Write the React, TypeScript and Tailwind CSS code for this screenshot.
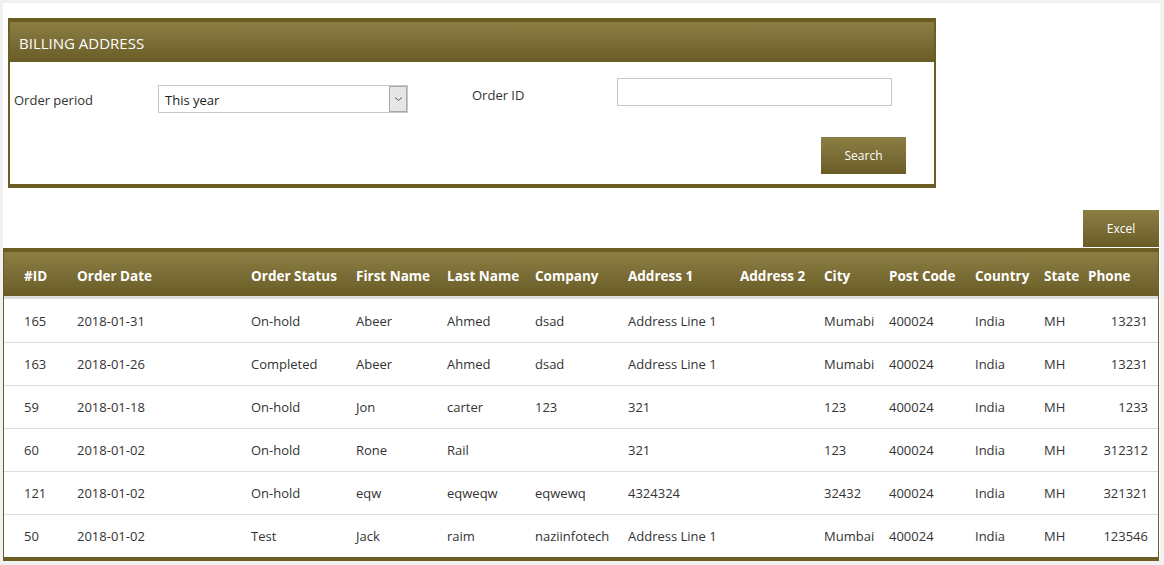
import React from "react";

const rows = [
  ["165", "2018-01-31", "On-hold", "Abeer", "Ahmed", "dsad", "Address Line 1", "", "Mumabi", "400024", "India", "MH", "13231"],
  ["163", "2018-01-26", "Completed", "Abeer", "Ahmed", "dsad", "Address Line 1", "", "Mumabi", "400024", "India", "MH", "13231"],
  ["59", "2018-01-18", "On-hold", "Jon", "carter", "123", "321", "", "123", "400024", "India", "MH", "1233"],
  ["60", "2018-01-02", "On-hold", "Rone", "Rail", "", "321", "", "123", "400024", "India", "MH", "312312"],
  ["121", "2018-01-02", "On-hold", "eqw", "eqweqw", "eqwewq", "4324324", "", "32432", "400024", "India", "MH", "321321"],
  ["50", "2018-01-02", "Test", "Jack", "raim", "naziinfotech", "Address Line 1", "", "Mumbai", "400024", "India", "MH", "123546"],
];

const headers = ["#ID", "Order Date", "Order Status", "First Name", "Last Name", "Company", "Address 1", "Address 2", "City", "Post Code", "Country", "State", "Phone"];
const widths = [74, 174, 105, 91, 88, 93, 112, 84, 65, 86, 69, 44, 71];

export default function App() {
  return (
    <div className="h-[565px] w-[1164px] bg-[#f1f1f1] p-[3px]" style={{ fontFamily: '"Open Sans", "Noto Sans", sans-serif' }}>
      <div className="h-[557px] w-[1157px] bg-white">
        <div className="h-[15px]" />
        {/* Billing panel */}
        <div className="ml-[5px] w-[928px] border-x-2 border-y-4 border-[#6b5d24]">
          <div className="flex h-[40px] items-center bg-gradient-to-b from-[#8c7f45] to-[#6a5c26] pl-[9px] pt-[2px] text-[15px] text-white">
            BILLING ADDRESS
          </div>
          <div className="h-[122px]">
            <div className="flex items-start">
              <div className="mt-[23px] flex items-center">
                <div className="w-[148px] pl-[4px] pt-[4px] text-[13px] text-[#333]">Order period</div>
                <div className="relative flex h-[28px] w-[250px] items-center border border-[#c8c8c8] bg-white pl-[6px] pt-[4px] text-[13px] text-[#222]">
                  This year
                  <div className="absolute right-[0px] top-[0px] flex h-[26px] w-[18px] items-center justify-center border border-[#a8a8a8] bg-[#e6e6e6]">
                    <svg width="9" height="6" viewBox="0 0 9 6">
                      <path d="M1 1.5 L4.5 4.5 L8 1.5" fill="none" stroke="#555" strokeWidth="1" />
                    </svg>
                  </div>
                </div>
              </div>
              <div className="mt-[16px] ml-[64px] flex items-start">
                <div className="w-[145px] pt-[8px] text-[13px] text-[#333]">Order ID</div>
                <div className="h-[28px] w-[275px] border border-[#c8c8c8] bg-white" />
              </div>
            </div>
            <div className="mt-[24px] flex justify-end pr-[28px]">
              <div className="flex h-[37px] w-[85px] items-center justify-center bg-gradient-to-b from-[#8c7f45] to-[#6a5c26] text-[12px] text-white">
                Search
              </div>
            </div>
          </div>
        </div>
        {/* Excel */}
        <div className="mt-[22px] flex justify-end pr-[1px]">
          <div className="flex h-[37px] w-[76px] items-center justify-center bg-gradient-to-b from-[#8c7f45] to-[#6a5c26] text-[12px] text-white">
            Excel
          </div>
        </div>
        {/* Table */}
        <div className="mt-[1px] w-[1156px] border-x border-y-4 border-[#6b5d24]">
          <table className="w-[1154px] table-fixed border-collapse">
            <colgroup>
              {widths.map((w, i) => (
                <col key={i} style={{ width: i === 0 ? w - 1 : i === widths.length - 1 ? w - 1 : w }} />
              ))}
            </colgroup>
            <thead>
              <tr className="h-[44px] bg-gradient-to-b from-[#8c7f45] to-[#6a5c26]">
                {headers.map((h, i) => (
                  <th key={i} className={`pt-[5px] text-left text-[13.5px] font-bold text-white whitespace-nowrap ${i === 0 ? "pl-[20px]" : ""}`}>
                    {h}
                  </th>
                ))}
              </tr>
              <tr className="h-[3px] bg-[#dddddd]">
                <td colSpan={13} className="p-0" />
              </tr>
            </thead>
            <tbody>
              {rows.map((r, ri) => (
                <tr key={ri} className={`h-[43px] ${ri < rows.length - 1 ? "border-b border-[#dddddd]" : ""}`}>
                  {r.map((c, ci) => (
                    <td
                      key={ci}
                      className={`pt-[2px] text-[13px] text-[#333] whitespace-nowrap ${ci === 0 ? "pl-[20px]" : ""} ${ci === 12 ? "pr-[10px] text-right" : "text-left"}`}
                    >
                      {c}
                    </td>
                  ))}
                </tr>
              ))}
            </tbody>
          </table>
        </div>
      </div>
    </div>
  );
}
